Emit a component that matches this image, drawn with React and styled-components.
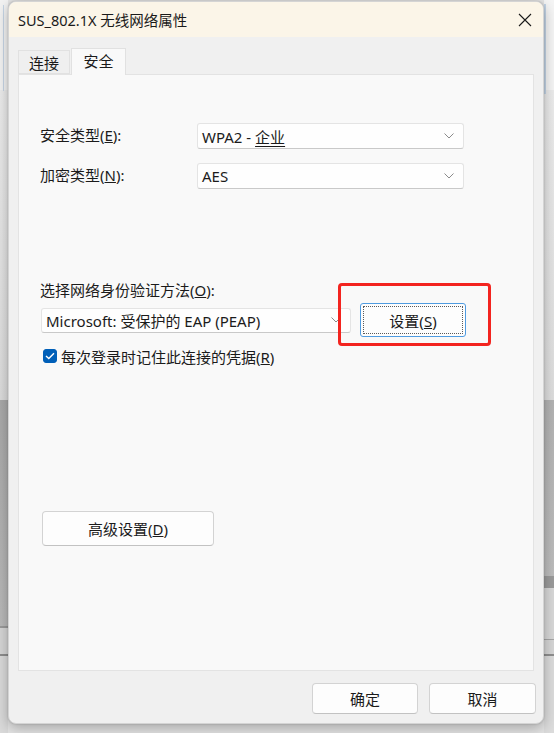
import React, { useState } from 'react'
import styled, { createGlobalStyle, css } from 'styled-components'

const GlobalStyle = createGlobalStyle`
  html, body {
    margin: 0;
    padding: 0;
    background: #e4e4e4;
  }
  body {
    font-family: "Noto Sans", "Noto Sans CJK SC", sans-serif;
    color: #1b1b1b;
  }
  * {
    box-sizing: border-box;
  }
`

const Desktop = styled.div`
  display: flex;
  width: 554px;
  height: 733px;
  overflow: hidden;
`

const leftStrip = css`
  width: 8px;
  flex: none;
  background:
    linear-gradient(to right, transparent 3px, #c7d6e6 3px, #c7d6e6 4px, transparent 4px) 0 5px / 100% 86px no-repeat,
    linear-gradient(to bottom,
      #f3f3f3 0, #f3f3f3 90px,
      #ececec 90px, #dcdcdc 400px,
      #a9a9a9 400px, #b9b9b9 626px,
      #9a9a9a 626px, #9a9a9a 628px,
      #d6d6d6 628px, #d6d6d6 654px,
      #8d8d8d 654px, #8d8d8d 656px,
      #dadada 656px);
`

const rightStrip = css`
  flex: 1;
  background:
    linear-gradient(to right, #c5d6e8 0, #c5d6e8 2px, transparent 2px) 0 4px / 100% 90px no-repeat,
    linear-gradient(to bottom,
      #f5f5f5 0, #f5f5f5 90px,
      #ececec 90px, #dedede 400px,
      #b3b3b3 400px, #bdbdbd 576px,
      #9b9b9b 576px, #9b9b9b 588px,
      #d8d8d8 588px, #d8d8d8 639px,
      #a6a6a6 639px, #a6a6a6 640px,
      #d6d6d6 640px, #d6d6d6 654px,
      #8f8f8f 654px, #8f8f8f 656px,
      #dcdcdc 656px);
`

const Strip = styled.div`
  height: 100%;
  ${(p) => (p.$side === 'left' ? leftStrip : rightStrip)}
`

const Window = styled.div`
  flex: none;
  width: 536px;
  height: 723px;
  margin-top: 1px;
  display: flex;
  flex-direction: column;
  background: #f0f0f0;
  border: 1px solid #d4d4d4;
  border-radius: 8px;
  overflow: hidden;
  box-shadow: 0 4px 14px rgba(0, 0, 0, 0.28), 0 0 2px rgba(0, 0, 0, 0.2);
  position: relative;
  z-index: 1;
`

const TitleBar = styled.div`
  height: 35px;
  flex: none;
  display: flex;
  align-items: center;
  justify-content: space-between;
  padding: 0 10px 0 9px;
  background: #fbf5e8;
`

const Title = styled.span`
  font-size: 14.5px;
  color: #1a1a1a;
`

const CloseButton = styled.button`
  width: 16px;
  height: 16px;
  padding: 0;
  border: none;
  background: transparent;
  display: flex;
  align-items: center;
  justify-content: center;
`

const Body = styled.div`
  flex: 1;
  display: flex;
  flex-direction: column;
  padding: 11px 9px 0 9px;
`

const Tabs = styled.div`
  height: 26px;
  display: flex;
  align-items: flex-end;
  gap: 1px;
`

const Tab = styled.div`
  height: ${(p) => (p.$active ? '27px' : '24px')};
  width: ${(p) => (p.$active ? '55px' : '52px')};
  margin-bottom: ${(p) => (p.$active ? '-1px' : '0')};
  display: flex;
  align-items: center;
  justify-content: center;
  padding-bottom: ${(p) => (p.$active ? '4px' : '0')};
  font-size: 15px;
  background: ${(p) => (p.$active ? '#f9f9f9' : '#efefef')};
  border: 1px solid #e1e1e1;
  border-bottom: ${(p) => (p.$active ? 'none' : '1px solid #e1e1e1')};
  position: relative;
  z-index: ${(p) => (p.$active ? 2 : 0)};
`

const Panel = styled.div`
  height: 597px;
  flex: none;
  background: #f9f9f9;
  border: 1px solid #e3e3e3;
  padding: 48px 0 0 21px;
  display: flex;
  flex-direction: column;
`

const FieldRow = styled.div`
  display: flex;
  align-items: center;
  height: 26px;
  margin-bottom: ${(p) => p.$gap || 0}px;
`

const Label = styled.div`
  width: 157px;
  flex: none;
  font-size: 15px;
  line-height: 20px;
  margin-top: -2px;
`

const Select = styled.div`
  width: ${(p) => p.$width}px;
  height: ${(p) => p.$height || 26}px;
  display: flex;
  align-items: center;
  justify-content: space-between;
  padding: 0 9px 0 4px;
  background: #fefefe;
  border: 1px solid #e4e4e4;
  border-bottom-color: #c9c9c9;
  border-radius: 3px;
  font-size: 15px;
`

const Emph = styled.span`
  text-decoration: underline;
  text-underline-offset: 3px;
`

const MethodLabel = styled.div`
  margin-top: 91px;
  font-size: 15px;
  line-height: 20px;
`

const MethodRow = styled.div`
  margin-top: 3px;
  height: 34px;
  display: flex;
  align-items: center;
  gap: 9px;
  padding-left: 1px;
`

const Annotated = styled.div`
  position: relative;
`

const RedBox = styled.div`
  position: absolute;
  left: -22px;
  top: -20px;
  width: 153px;
  height: 63px;
  border: 3px solid #f3241f;
  border-radius: 4px;
  pointer-events: none;
`

const Button = styled.button`
  width: ${(p) => p.$width}px;
  height: ${(p) => p.$height}px;
  padding: 0;
  font-family: inherit;
  font-size: 15px;
  color: #1b1b1b;
  background: #fdfdfd;
  border: 1px solid #d3d3d3;
  border-bottom-color: #c2c2c2;
  border-radius: 4px;
  position: relative;
  ${(p) =>
    p.$focused &&
    css`
      border: 1px solid #4f9be0;
      border-radius: 3px;
      &::after {
        content: '';
        position: absolute;
        inset: 2px;
        border: 1px dotted #5a5a5a;
      }
    `}
`

const CheckRow = styled.label`
  margin-top: 10px;
  height: 18px;
  display: flex;
  align-items: center;
  gap: 4px;
  padding-left: 3px;
  font-size: 15px;
`

const Box = styled.span`
  width: 14px;
  height: 14px;
  flex: none;
  border-radius: 3px;
  background: ${(p) => (p.$checked ? '#005fb8' : '#fff')};
  border: 1px solid ${(p) => (p.$checked ? '#005fb8' : '#8a8a8a')};
  display: flex;
  align-items: center;
  justify-content: center;
`

const AdvancedButton = styled(Button)`
  margin-top: 146px;
  margin-left: 2px;
`

const Footer = styled.div`
  display: flex;
  justify-content: flex-end;
  gap: 11px;
  padding-top: 12px;
  margin-right: -2px;
`

const Chevron = () => (
  <svg width="10" height="6" viewBox="0 0 10 6">
    <polyline points="0.5,0.5 5,5 9.5,0.5" fill="none" stroke="#8a8a8a" strokeWidth="1" />
  </svg>
)

const App = () => {
  const [remember, setRemember] = useState(true)

  return (
    <>
      <GlobalStyle />
      <Desktop>
        <Strip $side="left" />
        <Window>
          <TitleBar>
            <Title>SUS_802.1X 无线网络属性</Title>
            <CloseButton aria-label="关闭">
              <svg width="14" height="14" viewBox="0 0 14 14">
                <path d="M1 1 L13 13 M13 1 L1 13" stroke="#1a1a1a" strokeWidth="1.1" />
              </svg>
            </CloseButton>
          </TitleBar>

          <Body>
            <Tabs>
              <Tab>连接</Tab>
              <Tab $active>安全</Tab>
            </Tabs>

            <Panel>
              <FieldRow $gap={14}>
                <Label>安全类型(<u>E</u>):</Label>
                <Select $width={267}>
                  <span>WPA2 - <Emph>企业</Emph></span>
                  <Chevron />
                </Select>
              </FieldRow>
              <FieldRow>
                <Label>加密类型(<u>N</u>):</Label>
                <Select $width={267}>
                  <span>AES</span>
                  <Chevron />
                </Select>
              </FieldRow>

              <MethodLabel>选择网络身份验证方法(<u>O</u>):</MethodLabel>
              <MethodRow>
                <Select $width={310} $height={25}>
                  <span>Microsoft: 受保护的 EAP (PEAP)</span>
                  <Chevron />
                </Select>
                <Annotated>
                  <Button $width={106} $height={34} $focused>设置(<u>S</u>)</Button>
                  <RedBox />
                </Annotated>
              </MethodRow>

              <CheckRow onClick={() => setRemember(!remember)}>
                <Box $checked={remember}>
                  {remember && (
                    <svg width="10" height="8" viewBox="0 0 10 8">
                      <polyline points="1,4 3.8,6.6 9,1.2" fill="none" stroke="#fff" strokeWidth="1.4" />
                    </svg>
                  )}
                </Box>
                <span>每次登录时记住此连接的凭据(<u>R</u>)</span>
              </CheckRow>

              <AdvancedButton $width={172} $height={35}>高级设置(<u>D</u>)</AdvancedButton>
            </Panel>

            <Footer>
              <Button $width={106} $height={31}>确定</Button>
              <Button $width={107} $height={31}>取消</Button>
            </Footer>
          </Body>
        </Window>
        <Strip $side="right" />
      </Desktop>
    </>
  )
}

export default App
